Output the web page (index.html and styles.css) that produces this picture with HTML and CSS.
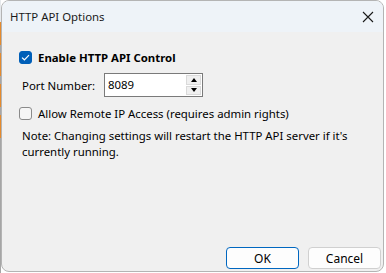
FILE: index.html
```html
<!DOCTYPE html>
<html lang="en">
<head>
    <meta charset="UTF-8">
    <title>HTTP API Options</title>
    <link rel="stylesheet" href="styles.css">
</head>
<body>

<div class="screen">
    <div class="behind">
        <div class="behind-gap top"></div>
        <div class="behind-seg"></div>
        <div class="behind-gap"></div>
        <div class="behind-seg"></div>
        <div class="behind-gap"></div>
        <div class="behind-seg"></div>
        <div class="behind-gap"></div>
        <div class="behind-seg"></div>
        <div class="behind-rest"></div>
    </div>

    <div class="window">
        <div class="title-bar">
            <span class="title">HTTP API Options</span>
            <svg class="close" width="12" height="12" viewBox="0 0 12 12">
                <path d="M1 1 L11 11 M11 1 L1 11" stroke="#1a1a1a" stroke-width="1.1" fill="none"/>
            </svg>
        </div>

        <div class="content">
            <label class="check-row first">
                <span class="box checked">
                    <svg width="9" height="7" viewBox="0 0 9 7">
                        <path d="M1 3.6 L3.4 5.8 L8 1.2" stroke="#fff" stroke-width="1.2" fill="none"/>
                    </svg>
                </span>
                <span class="bold">Enable HTTP API Control</span>
            </label>

            <div class="port-row">
                <span class="port-label">Port Number:</span>
                <div class="spin">
                    <span class="spin-value">8089</span>
                    <div class="spin-buttons">
                        <div class="spin-btn"><span class="arrow up"></span></div>
                        <div class="spin-btn"><span class="arrow down"></span></div>
                    </div>
                </div>
            </div>

            <label class="check-row second">
                <span class="box"></span>
                <span>Allow Remote IP Access (requires admin rights)</span>
            </label>

            <p class="note">Note: Changing settings will restart the HTTP API server if it's<br>currently running.</p>
        </div>

        <div class="footer">
            <button class="btn default">OK</button>
            <button class="btn">Cancel</button>
        </div>
    </div>
</div>

</body>
</html>
```

FILE: styles.css
```css
html, body {
    margin: 0;
    padding: 0;
    background: #ffffff;
}
body {
    font-family: "Noto Sans", "Open Sans", sans-serif;
    font-size: 11.4px;
    color: #000;
}
.screen {
    display: flex;
    width: 386px;
    height: 273px;
}
.behind {
    width: 1px;
    display: flex;
    flex-direction: column;
}
.behind-gap {
    height: 8px;
    background: #a6a6a6;
}
.behind-gap.top {
    height: 22px;
    background: #e6e9ec;
}
.behind-seg {
    height: 23px;
    background: #e58a2c;
}
.behind-rest {
    flex: 1;
    background: #a6a6a6;
}
.window {
    width: 381px;
    height: 270px;
    border: 1px solid #b4b4b4;
    border-radius: 8px;
    background: #f0f0f0;
    display: flex;
    flex-direction: column;
    overflow: hidden;
}
.title-bar {
    height: 31px;
    background: #eef3f8;
    display: flex;
    align-items: center;
    justify-content: space-between;
    padding: 0 9px 0 8px;
}
.title {
    color: #1a1a1a;
}
.content {
    flex: 1;
    padding: 0 0 0 17px;
}
.check-row {
    display: flex;
    align-items: center;
    height: 15px;
}
.check-row.first {
    margin-top: 18px;
}
.check-row.second {
    margin-top: 9px;
}
.box {
    width: 11px;
    height: 11px;
    border: 1px solid #8a8a8a;
    border-radius: 3px;
    background: #f6f6f6;
    margin-right: 6px;
    display: flex;
    align-items: center;
    justify-content: center;
}
.box.checked {
    background: #005fb8;
    border-color: #005fb8;
}
.bold {
    font-weight: bold;
}
.port-row {
    display: flex;
    align-items: center;
    margin-top: 8px;
    padding-left: 3px;
}
.port-label {
    width: 82px;
}
.spin {
    width: 97px;
    height: 22px;
    border: 1px solid #7a7a7a;
    background: #fff;
    display: flex;
    justify-content: space-between;
}
.spin-value {
    padding: 3px 0 0 3px;
}
.spin-buttons {
    width: 15px;
    display: flex;
    flex-direction: column;
    gap: 1px;
    padding: 1px 1px 1px 0;
}
.spin-btn {
    flex: 1;
    background: #f0f0f0;
    border: 1px solid #dadada;
    display: flex;
    align-items: center;
    justify-content: center;
}
.arrow {
    width: 0;
    height: 0;
    border-left: 3px solid transparent;
    border-right: 3px solid transparent;
}
.arrow.up {
    border-bottom: 4px solid #000;
}
.arrow.down {
    border-top: 4px solid #000;
}
.note {
    margin: 7px 0 0 3px;
    line-height: 16px;
    white-space: nowrap;
}
.footer {
    display: flex;
    justify-content: flex-end;
    gap: 9px;
    padding: 0 2px 2px 0;
}
.btn {
    width: 73px;
    height: 22px;
    font-family: inherit;
    font-size: 12px;
    background: #fdfdfd;
    border: 1px solid #d0d0d0;
    border-radius: 4px;
    color: #000;
    padding: 0;
}
.btn.default {
    border-color: #0067c0;
}
```
